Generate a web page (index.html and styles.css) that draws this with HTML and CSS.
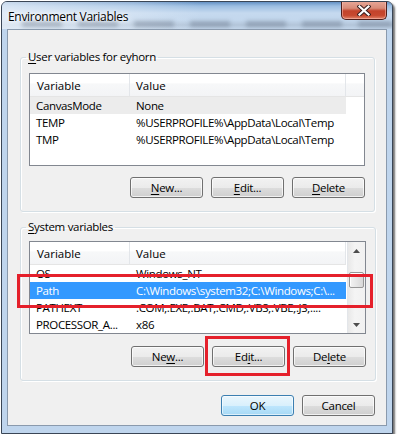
FILE: index.html
```html
<!DOCTYPE html>
<html lang="en">
<head>
    <meta charset="UTF-8">
    <title>Environment Variables</title>
    <link rel="stylesheet" href="styles.css">
</head>
<body>
    <div class="window">
        <div class="titlebar">
            <div class="glass-blur"></div>
            <span class="title">Environment Variables</span>
            <button class="close" aria-label="Close">
                <svg width="14" height="11" viewBox="0 0 14 11">
                    <path d="M2.5 1.5 L11.5 9.5 M11.5 1.5 L2.5 9.5" stroke="#3b2020" stroke-width="4.2" stroke-linecap="square"/>
                    <path d="M2.5 1.5 L11.5 9.5 M11.5 1.5 L2.5 9.5" stroke="#fff" stroke-width="2.2" stroke-linecap="square"/>
                </svg>
            </button>
        </div>
        <div class="client">
            <fieldset class="group group-user">
                <legend><u>U</u>ser variables for eyhorn</legend>
                <div class="list">
                    <div class="list-main">
                        <div class="list-head">
                            <span class="col-name">Variable</span>
                            <span class="col-value">Value</span>
                            <span class="col-fill"></span>
                        </div>
                        <div class="row selected-dim"><span class="col-name">CanvasMode</span><span class="col-value">None</span></div>
                        <div class="row"><span class="col-name">TEMP</span><span class="col-value">%USERPROFILE%\AppData\Local\Temp</span></div>
                        <div class="row"><span class="col-name">TMP</span><span class="col-value">%USERPROFILE%\AppData\Local\Temp</span></div>
                    </div>
                </div>
                <div class="buttons">
                    <button class="btn"><u>N</u>ew...</button>
                    <button class="btn"><u>E</u>dit...</button>
                    <button class="btn"><u>D</u>elete</button>
                </div>
            </fieldset>

            <fieldset class="group group-system">
                <legend><u>S</u>ystem variables</legend>
                <div class="list">
                    <div class="list-main">
                        <div class="list-head">
                            <span class="col-name">Variable</span>
                            <span class="col-value">Value</span>
                        </div>
                        <div class="row"><span class="col-name">OS</span><span class="col-value">Windows_NT</span></div>
                        <div class="row selected"><span class="col-name">Path</span><span class="col-value">C:\Windows\system32;C:\Windows;C:\...</span></div>
                        <div class="row"><span class="col-name">PATHEXT</span><span class="col-value">.COM;.EXE;.BAT;.CMD;.VBS;.VBE;.JS;....</span></div>
                        <div class="row"><span class="col-name">PROCESSOR_A...</span><span class="col-value">x86</span></div>
                    </div>
                    <div class="scrollbar">
                        <div class="sb-arrow"><svg width="7" height="4" viewBox="0 0 7 4"><path d="M0 4 L3.5 0 L7 4 Z" fill="#4d4d4d"/></svg></div>
                        <div class="sb-track">
                            <div class="sb-thumb"></div>
                        </div>
                        <div class="sb-arrow"><svg width="7" height="4" viewBox="0 0 7 4"><path d="M0 0 L7 0 L3.5 4 Z" fill="#4d4d4d"/></svg></div>
                    </div>
                </div>
                <div class="buttons">
                    <button class="btn">Ne<u>w</u>...</button>
                    <button class="btn">Ed<u>i</u>t...</button>
                    <button class="btn">De<u>l</u>ete</button>
                </div>
            </fieldset>

            <div class="dialog-buttons">
                <button class="btn default">OK</button>
                <button class="btn">Cancel</button>
            </div>
        </div>
    </div>

    <!-- red annotation boxes drawn over the screenshot -->
    <div class="mark mark-path"></div>
    <div class="mark mark-edit"></div>
</body>
</html>
```

FILE: styles.css
```css
body {
    margin: 0;
    background: #fff;
    font-family: "Open Sans", "Noto Sans", sans-serif;
    font-size: 11.5px;
    color: #000;
}
u {
    text-decoration-thickness: 1px;
    text-underline-offset: 2px;
}
.window {
    box-sizing: border-box;
    width: 392px;
    height: 433px;
    margin: 1px 0 0 1px;
    border: 1px solid #3a4656;
    border-radius: 6px 6px 0 0;
    background: #bfd5ed;
    box-shadow: 2px 2px 2px rgba(0, 0, 0, 0.55);
    display: flex;
    flex-direction: column;
}
.titlebar {
    position: relative;
    height: 27px;
    display: flex;
    align-items: flex-start;
    border-radius: 5px 5px 0 0;
    overflow: hidden;
    background:
        linear-gradient(to right, rgba(235, 242, 250, 0.75) 0, rgba(235, 242, 250, 0.35) 130px, rgba(235, 242, 250, 0) 200px),
        linear-gradient(to bottom, #6491c4 0, #9bbde1 4px, #c5d9ef 11px, #c3d7ed 18px, #b3c5d9 23px, #c2d5ea 27px);
}
.glass-blur {
    position: absolute;
    left: 20px;
    right: 0;
    top: 19px;
    height: 6px;
    filter: blur(2px);
    background: repeating-linear-gradient(to right,
        rgba(80, 95, 115, 0.35) 0, rgba(80, 95, 115, 0.35) 40px,
        rgba(80, 95, 115, 0) 40px, rgba(80, 95, 115, 0) 56px);
}
.title {
    position: relative;
    margin: 6px 0 0 6px;
    font-size: 12px;
    letter-spacing: -0.3px;
    text-shadow: 0 0 6px #fff, 0 0 3px #fff;
}
.close {
    position: relative;
    margin: -1px 5px 0 auto;
    width: 46px;
    height: 19px;
    padding: 0;
    border: 1px solid #4e1e1a;
    border-top: none;
    border-radius: 0 0 5px 5px;
    background: linear-gradient(to bottom, #e9a99a 0, #d88b78 40%, #c3432b 55%, #c7492f 80%, #e0846a 100%);
    box-shadow: inset 0 0 0 1px rgba(255, 200, 190, 0.5);
    display: flex;
    align-items: center;
    justify-content: center;
}
.client {
    box-sizing: border-box;
    height: 397px;
    margin: 0 5px;
    border: 1px solid #8a9aad;
    background: #f0f0f0;
    padding: 19px 11px 0 12px;
}
.group {
    margin: 0 0 7px 0;
    padding: 8px 9px 13px 8px;
    border: 1px solid #d5dfe5;
    border-radius: 3px;
    box-shadow: inset 1px 1px 0 #fff, 1px 1px 0 #fff;
}
.group-system {
    padding-top: 6px;
}
.group legend {
    padding: 0 2px;
    margin-left: -3px;
    line-height: 16px;
    font-size: 11.5px;
    letter-spacing: -0.3px;
}
.list {
    box-sizing: border-box;
    height: 93px;
    border: 1px solid #828790;
    background: #fff;
    display: flex;
    overflow: hidden;
}
.list-main {
    flex: 1;
}
.list-head {
    display: flex;
    height: 23px;
    box-sizing: border-box;
    border-bottom: 1px solid #e5e5e5;
    background: linear-gradient(to bottom, #fff 0, #fff 40%, #f7f8f9 45%, #f3f4f6 100%);
}
.list-head span {
    box-sizing: border-box;
    display: flex;
    align-items: center;
    border-right: 1px solid #e3e6ea;
}
.list-head .col-fill {
    flex: 1;
    border-right: none;
}
.col-name {
    width: 100px;
    padding-left: 7px;
    box-sizing: border-box;
    flex: none;
    white-space: nowrap;
}
.col-value {
    width: 216px;
    padding-left: 6px;
    box-sizing: border-box;
    flex: none;
    white-space: nowrap;
    overflow: hidden;
}
.row {
    display: flex;
    height: 17px;
    line-height: 17px;
    width: 316px;
    letter-spacing: -0.35px;
}
.row .col-name {
    padding-left: 6px;
}
.selected-dim {
    background: #ececec;
}
.selected {
    background: #3399ff;
    color: #fff;
}
.scrollbar {
    width: 17px;
    margin-left: 1px;
    display: flex;
    flex-direction: column;
    border-left: 1px solid #e3e6ea;
    background: linear-gradient(to right, #e8e8e8, #f4f4f4 40%, #f1f1f1);
}
.sb-arrow {
    height: 17px;
    display: flex;
    align-items: center;
    justify-content: center;
}
.sb-track {
    flex: 1;
    padding-top: 13px;
}
.sb-thumb {
    box-sizing: border-box;
    height: 16px;
    margin: 0 1px;
    border: 1px solid #979797;
    border-radius: 2px;
    background: linear-gradient(to right, #f3f3f3, #e6e6e6 50%, #d8d8d8);
    box-shadow: inset 1px 1px 0 #fff;
}
.buttons,
.dialog-buttons {
    display: flex;
    justify-content: flex-end;
    gap: 8px;
}
.buttons {
    margin-top: 12px;
}
.group-user .buttons {
    margin-top: 11px;
}
.dialog-buttons {
    margin-top: 14px;
}
.btn {
    width: 73px;
    height: 21px;
    padding: 0 0 1px 0;
    font-family: inherit;
    font-size: 11.5px;
    letter-spacing: -0.3px;
    color: #000;
    border: 1px solid #707070;
    border-radius: 3px;
    background: linear-gradient(to bottom, #f2f2f2 0, #ebebeb 50%, #dddddd 51%, #cfcfcf 100%);
    box-shadow: inset 0 0 0 1px rgba(255, 255, 255, 0.7);
}
.btn.default {
    border-color: #3c7fb1;
    background: linear-gradient(to bottom, #eaf6fd 0, #d9f0fc 50%, #bee6fd 51%, #a7d9f5 100%);
    box-shadow: inset 0 0 0 1px rgba(255, 255, 255, 0.6);
}
.mark {
    position: absolute;
    box-sizing: border-box;
    border: 3px solid #e5202b;
}
.mark-path {
    left: 17px;
    top: 274px;
    width: 356px;
    height: 34px;
}
.mark-edit {
    left: 205px;
    top: 336px;
    width: 85px;
    height: 40px;
}
```
